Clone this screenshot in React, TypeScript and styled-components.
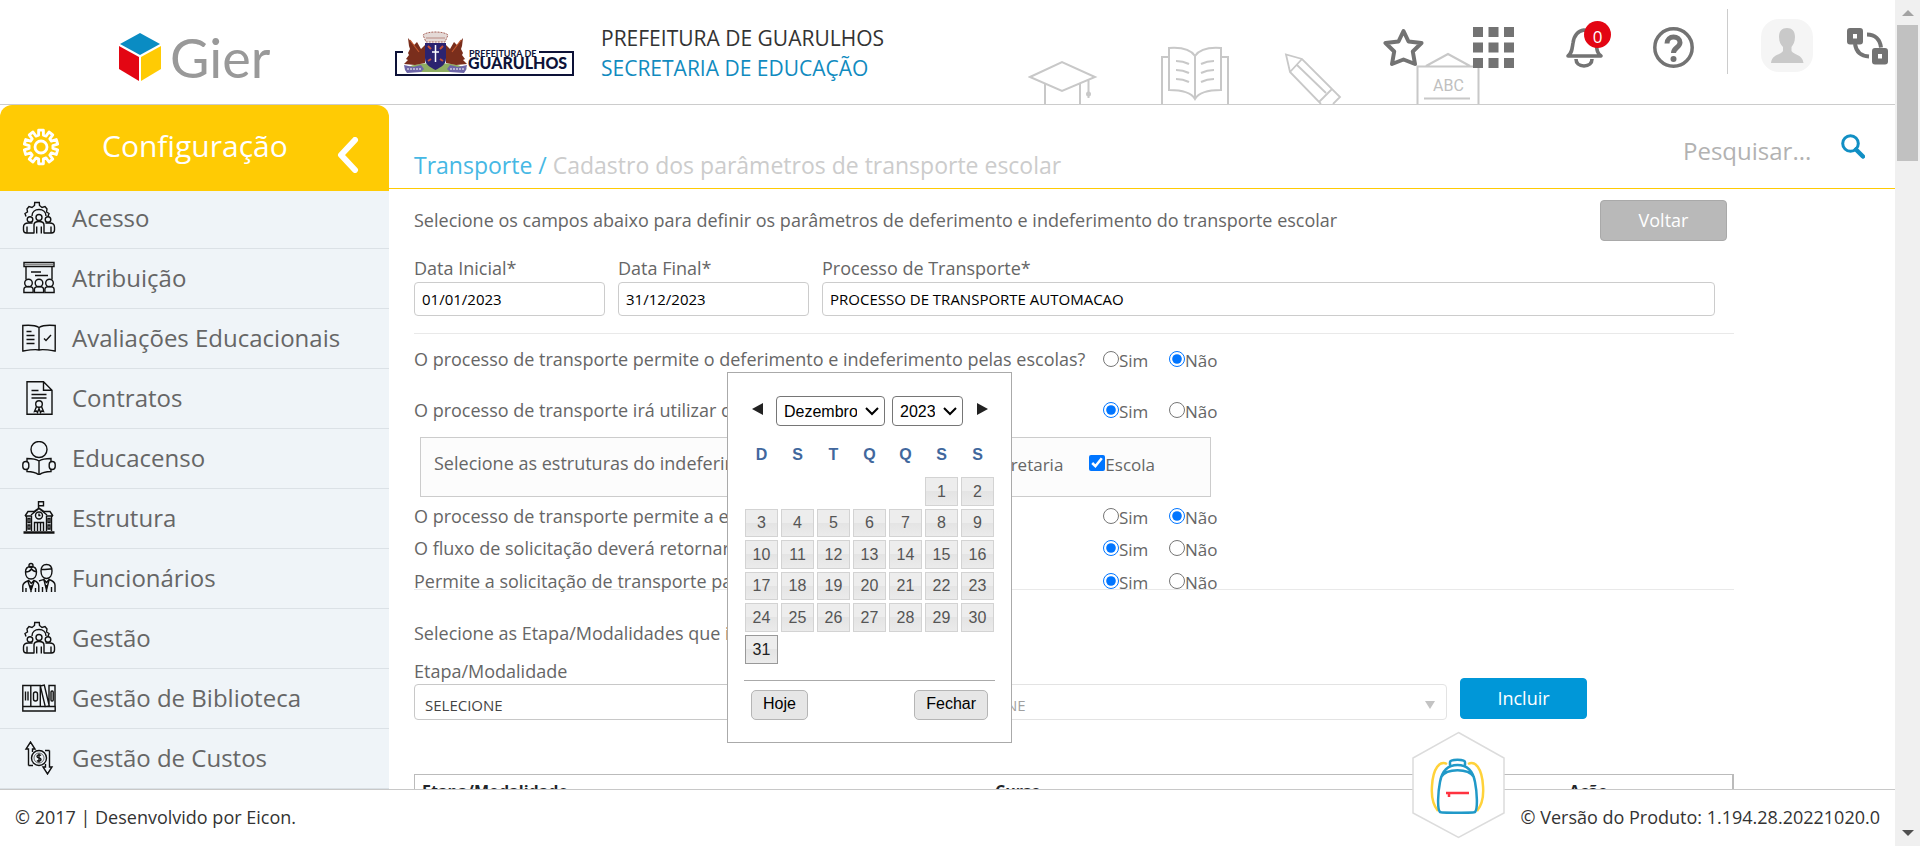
import React from 'react';
import styled, { createGlobalStyle } from 'styled-components';

const GlobalStyle = createGlobalStyle`
  * { box-sizing: border-box; }
  body { margin: 0; font-family: "Open Sans", "Noto Sans", sans-serif; font-size: 18px; line-height: 24px; color: #666; background: #fff; }
  button, input, select { font-family: inherit; margin: 0; }
`;

/* ---------- shell ---------- */

const Window = styled.div`
  display: flex;
  height: 100vh;
  overflow: hidden;
`;

const Page = styled.div`
  flex: 1;
  min-width: 0;
  display: flex;
  flex-direction: column;
`;

const Body = styled.div`
  flex: 1;
  min-height: 0;
  display: flex;
`;

const ScrollTrack = styled.div`
  width: 25px;
  background: #f0f0f0;
  display: flex;
  flex-direction: column;
  align-items: center;
  padding: 10px 0;
`;

const ScrollThumb = styled.div`
  width: 21px;
  height: 136px;
  margin-top: 9px;
  background: #c1c1c1;
`;

const ScrollArrow = styled.div<{ $down?: boolean }>`
  width: 0;
  height: 0;
  border: 6px solid transparent;
  ${(p) =>
    p.$down
      ? 'margin-top: auto; border-bottom: 0; border-top-color: #505050;'
      : 'border-top: 0; border-bottom-color: #a3a3a3;'}
`;

/* ---------- top bar ---------- */

const TopBar = styled.header`
  position: relative;
  height: 105px;
  flex-shrink: 0;
  border-bottom: 1px solid #ccc;
  display: flex;
  align-items: flex-start;
  padding: 0 7px 0 119px;
`;

const GierLogo = styled.svg`
  width: 160px;
  height: 66px;
  margin-top: 33px;
  flex-shrink: 0;
`;

const CityLogo = styled.svg`
  width: 179px;
  height: 46px;
  margin: 31px 27px 0 116px;
  flex-shrink: 0;
`;

const Org = styled.div`
  margin-top: 23px;
  font-size: 21px;
  line-height: 30px;
  white-space: nowrap;
  color: #333;
`;

const OrgUnit = styled.div`
  color: #118bbf;
`;

const SchoolArt = styled.svg`
  position: absolute;
  right: 415px;
  bottom: 0;
  width: 452px;
  height: 58px;
  fill: none;
  stroke: #c8c8c8;
  stroke-width: 2;
`;

const Tools = styled.div`
  position: relative;
  margin-left: auto;
  display: flex;
  align-items: center;
  padding-top: 9px;
`;

const ToolButton = styled.button<{ $gap?: number }>`
  position: relative;
  width: 41px;
  height: 41px;
  padding: 0;
  border: 0;
  background: none;
  margin-right: ${(p) => p.$gap ?? 49}px;
  margin-top: 12px;
  svg { display: block; }
`;

const Badge = styled.span`
  position: absolute;
  left: 21px;
  top: -6px;
  width: 27px;
  height: 27px;
  border-radius: 50%;
  background: #e30613;
  color: #fff;
  font-size: 17px;
  line-height: 32px;
  text-align: center;
`;

const Divider = styled.div`
  width: 1px;
  height: 65px;
  background: #ccc;
`;

const Avatar = styled.div`
  width: 52px;
  height: 53px;
  margin: 8px 34px 0 33px;
  border-radius: 18px;
  background: #f5f5f5;
  overflow: hidden;
`;

/* ---------- sidebar ---------- */

const Sidebar = styled.nav`
  width: 389px;
  flex-shrink: 0;
  background: #eff4f8;
  overflow: hidden;
`;

const SideCorner = styled.div`
  background: #fff;
`;

const SideHead = styled.div`
  height: 86px;
  display: flex;
  align-items: center;
  justify-content: space-between;
  padding: 0 29px 2px 22px;
  border-radius: 12px 12px 0 0;
  background: #ffcb04;
  color: #fff;
  font-size: 30px;
  line-height: 38px;
`;

const SideTitle = styled.div`
  flex: 1;
  padding: 0 0 2px 42px;
`;

const CollapseButton = styled.button`
  border: 0;
  padding: 16px 0 0;
  background: none;
  svg { display: block; }
`;

const SideList = styled.ul`
  list-style: none;
  margin: 0;
  padding: 0;
`;

const SideItem = styled.li`
  border-bottom: 1px solid #dbe1e6;
  &:first-child a { height: 57px; padding-bottom: 4px; }
`;

const SideLink = styled.a`
  display: flex;
  align-items: center;
  height: 59px;
  padding: 0 0 2px 22px;
  color: #666;
  font-size: 24px;
  text-decoration: none;
  svg { width: 34px; height: 34px; margin-right: 16px; fill: none; stroke: #111; stroke-width: 1.4; flex-shrink: 0; }
`;

/* ---------- main ---------- */

const Main = styled.main`
  flex: 1;
  min-width: 0;
  overflow: hidden;
`;

const PageHead = styled.div`
  height: 84px;
  border-bottom: 1px solid #ffcb04;
  display: flex;
  justify-content: space-between;
  align-items: flex-start;
  padding: 0 30px 0 25px;
`;

const Crumbs = styled.h1`
  margin: 44px 0 0;
  font-weight: 400;
  font-size: 23px;
  line-height: 32px;
  color: #ccc;
  a { color: #46b8e4; text-decoration: none; }
`;

const Search = styled.form`
  display: flex;
  align-items: flex-start;
  padding-top: 29px;
`;

const SearchInput = styled.input`
  width: 158px;
  height: 32px;
  padding: 0;
  border: 0;
  background: none;
  font-size: 24px;
  outline: 0;
  &::placeholder { color: #b2b2b2; opacity: 1; }
`;

const SearchButton = styled.button`
  border: 0;
  padding: 0;
  background: none;
  svg { display: block; }
`;

const Content = styled.div`
  position: relative;
  padding: 11px 161px 0 25px;
`;

const IntroRow = styled.div`
  display: flex;
  justify-content: space-between;
  align-items: center;
  padding-right: 7px;
`;

const Intro = styled.p`
  margin: 0;
  padding-bottom: 2px;
`;

const ActionButton = styled.button<{ $primary?: boolean }>`
  width: 127px;
  height: 41px;
  padding: 0 0 2px;
  margin-bottom: ${(p) => (p.$primary ? 1 : 0)}px;
  border-radius: 4px;
  border: 1px solid ${(p) => (p.$primary ? '#0097d8' : '#a9a9a9')};
  background: ${(p) => (p.$primary ? '#0097d8' : '#b9b9b9')};
  color: #fff;
  font-size: 18px;
  line-height: 24px;
`;

const Fields = styled.div`
  display: grid;
  grid-template-columns: 191px 191px 1fr;
  column-gap: 13px;
  padding-right: 19px;
  margin: 15px 0 17px;
`;

const Field = styled.div`
  display: flex;
  flex-direction: column;
  gap: 2px;
`;

const TextInput = styled.input`
  width: 100%;
  height: 34px;
  padding: 0 7px;
  border: 1px solid #ccc;
  border-radius: 4px;
  color: #000;
  font-size: 15px;
`;

const Rule = styled.hr<{ $pull?: boolean }>`
  border: 0;
  height: 1px;
  background: #e9e9e9;
  margin: ${(p) => (p.$pull ? '-4px' : '0')} 0 0;
`;

const Question = styled.fieldset<{ $space: number }>`
  display: flex;
  min-width: 0;
  height: 24px;
  border: 0;
  padding: 0;
  margin: ${(p) => p.$space}px 0 0;
`;

const QuestionText = styled.span`
  width: 689px;
  white-space: nowrap;
`;

const Option = styled.label`
  display: flex;
  align-items: flex-start;
  font-size: 17px;
  line-height: 28px;
  white-space: nowrap;
  input { width: 16px; height: 16px; margin: 4px 0 0; accent-color: #0075ff; }
`;

const Options = styled.div`
  display: grid;
  grid-template-columns: 66px auto;
`;

const StructureBox = styled.fieldset`
  display: flex;
  justify-content: space-between;
  width: 791px;
  height: 60px;
  margin: 15px 0 0 6px;
  padding: 13px 55px 0 13px;
  border: 1px solid #ccc;
  background: #fcfcfc;
`;

const Checks = styled.div`
  display: flex;
  gap: 26px;
`;

const StageIntro = styled.p`
  margin: 31px 0 14px;
`;

const StageRow = styled.div`
  display: grid;
  grid-template-columns: 1fr 1fr 127px;
  column-gap: 13px;
  align-items: end;
  padding-right: 147px;
`;

const StageField = styled.div`
  display: flex;
  flex-direction: column;
  gap: 1px;
`;

const SelectBox = styled.div<{ $off?: boolean }>`
  position: relative;
  opacity: ${(p) => (p.$off ? 0.5 : 1)};
  &::after {
    content: '';
    position: absolute;
    right: 12px;
    top: 17px;
    border: 5px solid transparent;
    border-top: 8px solid #888;
    border-bottom: 0;
  }
`;

const StageSelect = styled.select`
  appearance: none;
  display: block;
  width: 100%;
  height: 36px;
  padding: 6px 30px 0 10px;
  border: 1px solid #c8c8c8;
  border-radius: 4px;
  background: #fff;
  color: #444;
  font-size: 15px;
  opacity: 1;
`;

const StageTable = styled.table`
  width: 100%;
  margin-top: 54px;
  border: 1px solid #bbb;
  border-right-width: 2px;
  border-spacing: 0;
  table-layout: fixed;
  th { padding: 4px 7px; text-align: left; font-size: 16px; color: #212529; line-height: 24px; }
`;

/* ---------- calendar popup ---------- */

const Calendar = styled.div`
  position: absolute;
  left: 338px;
  top: 183px;
  width: 285px;
  height: 371px;
  padding: 23px 14px 0;
  border: 1px solid #aaa;
  background: #fff;
  font-family: "Liberation Sans", Arial, sans-serif;
  font-size: 16px;
`;

const CalHead = styled.div`
  display: flex;
  align-items: center;
  padding: 0 8px 0 10px;
`;

const CalArrow = styled.button<{ $next?: boolean }>`
  width: 12px;
  height: 12px;
  padding: 0;
  border: 0;
  background: none;
  margin: ${(p) => (p.$next ? '0 0 5px auto' : '0 12px 5px 0')};
  svg { display: block; }
`;

const CalSelectBox = styled.div<{ $w: number }>`
  position: relative;
  width: ${(p) => p.$w}px;
  margin-right: 7px;
  svg {
    position: absolute;
    right: 6px;
    top: 11px;
    pointer-events: none;
  }
`;

const CalSelect = styled.select`
  appearance: none;
  display: block;
  width: 100%;
  height: 30px;
  padding: 0 27px 0 7px;
  border: 1px solid #767676;
  border-radius: 4px;
  background: #fff;
  color: #000;
  font-size: 16px;
  text-overflow: clip;
`;

const Days = styled.table`
  border-spacing: 3px;
  table-layout: fixed;
  width: 255px;
  margin-top: 8px;
  th { height: 37px; padding: 0 0 1px; color: #41679d; font-size: 16px; }
  td { height: 28px; padding: 0; }
  tbody tr:nth-child(odd) td { height: 29px; }
  tbody tr:last-child td { height: 29px; }
`;

const DayButton = styled.button<{ $current?: boolean }>`
  display: block;
  width: 100%;
  height: 100%;
  padding: 0;
  border: 1px solid ${(p) => (p.$current ? '#999' : '#d3d3d3')};
  background: linear-gradient(#ededed 50%, #e4e4e4 50%, #ebebeb);
  color: ${(p) => (p.$current ? '#212121' : '#555')};
  font-size: 16px;
`;

const CalFoot = styled.div`
  display: flex;
  justify-content: space-between;
  margin: 13px 2px 0;
  padding: 9px 7px 0 7px;
  border-top: 1px solid #aaa;
`;

const CalButton = styled.button`
  height: 30px;
  padding: 0 11px 2px;
  border: 1px solid #b5b5b5;
  border-radius: 5px;
  background: #e6e6e6;
  color: #000;
  font-size: 16px;
`;

/* ---------- footer ---------- */

const Footer = styled.footer`
  position: relative;
  height: 57px;
  flex-shrink: 0;
  display: flex;
  justify-content: space-between;
  padding: 15px 15px 0;
  border-top: 1px solid #c8c8c8;
  background: #fff;
  color: #333;
`;

const Backpack = styled.button`
  position: absolute;
  right: 389px;
  bottom: 7px;
  width: 95px;
  height: 108px;
  padding: 0;
  border: 0;
  background: none;
  svg { display: block; }
`;

/* ---------- icons ---------- */

const TeamGear = () => (
  <svg viewBox="0 0 34 34">
    <path d="M4 15.500l-1-3 2.500-1.500-.5-3 2-2.500 3 1 2.500-2 .2-3h4.600l.2 3 2.500 2 3-1 2 2.500-.5 3 2.500 1.500-1 3" />
    <path d="M10 15c0-4 3-6.500 7-6.500s7 2.500 7 6.500" />
    <circle cx="17" cy="16.500" r="3" />
    <circle cx="8" cy="18.500" r="2.800" />
    <circle cx="26" cy="18.500" r="2.800" />
    <path d="M12 32.500V24c0-2.500 2-3.500 5-3.500s5 1 5 3.500v8.500M14.700 32.500v-7M19.300 32.500v-7M12 32H4.500c-2 0-3-1-3-3v-3c0-3 2-4 5-4h4M22 32h7.500c2 0 3-1 3-3v-3c0-3-2-4-5-4h-4M5 31.500v-6M29 31.500v-6" />
  </svg>
);

const Classroom = () => (
  <svg viewBox="0 0 34 34">
    <path d="M2 1.500h30v4H2zM4 5.500v13M30 5.500v13M9 11h10M13 14.500h13" />
    <path d="M3 3.500h28" stroke="#888" />
    {[6.500, 17, 27.500].map((x) => (
      <g key={x}>
        <circle cx={x} cy="22" r="3.800" />
        <path d={`M${x - 4.600} 31.500v-3c0-2 1.500-3 4.600-3s4.600 1 4.600 3v3z`} />
      </g>
    ))}
  </svg>
);

const OpenBook = () => (
  <svg viewBox="0 0 34 34">
    <path d="M17 6.500C13 4 6 4 .8 4.500v25.500C7 29 13 28 17 29c4-1 10 0 16.200 1V4.500C28 4 21 4 17 6.500zM17 6.500V29" />
    <path d="M4.500 10.500h5M4.500 14.500h8M4.500 18.500h8M4.500 22.500h8M22 17.500l2 2 5-5.500" />
  </svg>
);

const Contract = () => (
  <svg viewBox="0 0 34 34">
    <path d="M5 .8h16.500l8.500 8.500v24H5zM21.500.8v8.500H30M9.500 9.500h7M9.500 13.500h15M9.500 17h15" />
    <circle cx="17" cy="23" r="3.300" />
    <path d="M14.500 25.500l-2 5 2-.5 1 1.500 1.500-4 1.500 4 1-1.500 2 .5-2-5" />
  </svg>
);

const Reader = () => (
  <svg viewBox="0 0 34 34">
    <circle cx="17" cy="8.500" r="8" />
    <path d="M17 20c-3-2-7-2.500-12-2.500v13c5 0 9 1 12 3.500 3-2.500 7-3.500 12-3.500v-13c-5 0-9 .5-12 2.500zM17 20v14" />
    <rect x=".8" y="20.500" width="6" height="8" rx="3" fill="#eff4f8" />
    <rect x="27.200" y="20.500" width="6" height="8" rx="3" fill="#eff4f8" />
  </svg>
);

const School = () => (
  <svg viewBox="0 0 34 34">
    <path d="M16.500 7V.8h5v4h-5M3 15l3-4.500h6L17 7l5 3.500h6l3 4.500M3 15h6M25 15h6M9 14l8-6.500 8 6.500M4.500 15v15M29.500 15v15M9.500 14.500V30M24.500 14.500V30" />
    <circle cx="17" cy="14.500" r="3.500" />
    <path d="M17 12.500v2h1.500M6 17.500h2v4H6zM6 24h2v4H6zM26 17.500h2v4h-2zM26 24h2v4h-2zM12.500 30v-8.500h9V30M15.500 30v-8.500M18.500 30v-8.500" />
    <path d="M1.500 31.500h31" strokeWidth="2.500" />
  </svg>
);

const Staff = () => (
  <svg viewBox="0 0 34 34">
    <circle cx="9" cy="4.500" r="2" />
    <path d="M3.500 11c0-4 2-5.500 5.500-5.500s5.500 1.500 5.500 5.500-2 7-5.500 7-5.500-3-5.500-7zM3.500 11c3 0 5-1.500 6-3 1 1.500 3 2.500 5 3M19 10c0-4 2-6.500 5.500-6.500s5.500 2.500 5.500 6.500-2 7.500-5.500 7.500S19 14 19 10zM19 8.500c4 0 8 0 11-1" />
    <path d="M.8 31v-6c0-3 2-4 6-5.500l2.500 3 2.500-3c3 1 5 2.500 5 5.500v6M6 20.500l3 9 3-9M4 31v-4M13.500 31v-4M17 20c2-1 3-1 5-1.500l2.500 3 2.500-3c4 1.500 6 2.500 6 5.500v7M22 19l2.500 10L27 19M20.500 31v-5M29.500 31v-5M9 24v7M24.500 24v7" />
  </svg>
);

const Library = () => (
  <svg viewBox="0 0 34 34">
    <path d="M.8 4.500h8v21h-8zM8.800 4.500h9.500v21H8.800zM18.300 5l4-1 5 21-4 .8zM27 4.500h6v21h-6zM.8 25.500h32.400v4.500H.8zM3.500 10.500v9M6 10.500v9M18.300 5v20" />
    <rect x="11.500" y="11" width="4" height="9" rx="2" />
    <rect x="29" y="10" width="2.200" height="10" rx="1" />
  </svg>
);

const Costs = () => (
  <svg viewBox="0 0 34 34">
    <circle cx="17" cy="17" r="7.500" />
    <circle cx="17" cy="17" r="5" strokeWidth=".6" />
    <path d="M19 14.500c-1-1-4-1-4 1s4 1 4 3-3 2-4 1M17 12.500v9" />
    <path d="M6.500 24.500V8H4l4.500-7L13 8h-2.500v3M6.500 24.500H11M27.500 9.500V26H30l-4.500 7-4.500-7h2.500v-3M27.500 9.500H23" />
  </svg>
);

const menu = [
  { label: 'Acesso', Icon: TeamGear },
  { label: 'Atribuição', Icon: Classroom },
  { label: 'Avaliações Educacionais', Icon: OpenBook },
  { label: 'Contratos', Icon: Contract },
  { label: 'Educacenso', Icon: Reader },
  { label: 'Estrutura', Icon: School },
  { label: 'Funcionários', Icon: Staff },
  { label: 'Gestão', Icon: TeamGear },
  { label: 'Gestão de Biblioteca', Icon: Library },
  { label: 'Gestão de Custos', Icon: Costs },
];

const gearPoints = () => {
  const pts: string[] = [];
  const teeth = 10;
  for (let i = 0; i < teeth; i++) {
    const a = (i / teeth) * Math.PI * 2 - Math.PI / 2;
    [[-0.2, 12], [-0.14, 17], [0.14, 17], [0.2, 12]].forEach(([d, r]) => {
      pts.push(`${(18 + Math.cos(a + d) * r).toFixed(1)},${(18 + Math.sin(a + d) * r).toFixed(1)}`);
    });
  }
  return pts.join(' ');
};

const weeks: (number | null)[][] = [
  [null, null, null, null, null, 1, 2],
  [3, 4, 5, 6, 7, 8, 9],
  [10, 11, 12, 13, 14, 15, 16],
  [17, 18, 19, 20, 21, 22, 23],
  [24, 25, 26, 27, 28, 29, 30],
  [31, null, null, null, null, null, null],
];

const YesNo = ({ name, text, value, space }: { name: string; text: string; value: 'sim' | 'nao'; space: number }) => (
  <Question $space={space} aria-label={text}>
    <QuestionText>{text}</QuestionText>
    <Options>
      <Option><input type="radio" name={name} defaultChecked={value === 'sim'} />Sim</Option>
      <Option><input type="radio" name={name} defaultChecked={value === 'nao'} />Não</Option>
    </Options>
  </Question>
);

const PeriodSelect = ({ label, value, width }: { label: string; value: string; width: number }) => (
  <CalSelectBox $w={width}>
    <CalSelect aria-label={label}><option>{value}</option></CalSelect>
    <svg width="14" height="9" fill="none" stroke="#000" strokeWidth="2"><path d="M1 1l6 6 6-6" /></svg>
  </CalSelectBox>
);

const DatePicker = () => (
  <Calendar>
    <CalHead>
      <CalArrow aria-label="Anterior">
        <svg width="12" height="12"><path d="M11 0v12L0 6z" fill="#222" /></svg>
      </CalArrow>
      <PeriodSelect label="Mês" value="Dezembro" width={109} />
      <PeriodSelect label="Ano" value="2023" width={71} />
      <CalArrow $next aria-label="Próximo">
        <svg width="12" height="12"><path d="M0 0v12L11 6z" fill="#222" /></svg>
      </CalArrow>
    </CalHead>
    <Days>
      <thead>
        <tr>{['D', 'S', 'T', 'Q', 'Q', 'S', 'S'].map((d, i) => <th key={i}>{d}</th>)}</tr>
      </thead>
      <tbody>
        {weeks.map((week, i) => (
          <tr key={i}>
            {week.map((day, j) => (
              <td key={j}>{day && <DayButton $current={day === 31}>{day}</DayButton>}</td>
            ))}
          </tr>
        ))}
      </tbody>
    </Days>
    <CalFoot>
      <CalButton>Hoje</CalButton>
      <CalButton>Fechar</CalButton>
    </CalFoot>
  </Calendar>
);

export default function App() {
  return (
    <Window>
      <GlobalStyle />
      <Page>
        <TopBar>
          <GierLogo viewBox="0 0 160 66" role="img" aria-label="Gier">
            <path d="M21 0L41 11 21 22 1 11z" fill="#0a8cc3" />
            <path d="M0 13l20 11v24L0 36z" fill="#e30613" />
            <path d="M42 13L22 24v24l20-12z" fill="#ffcb04" />
            <text x="51" y="45" fontFamily="Lato" fontSize="54" fontWeight="400" fill="#999">Gier</text>
          </GierLogo>
          <CityLogo viewBox="0 0 179 46" role="img" aria-label="Prefeitura de Guarulhos">
            <path d="M8 21H1v23h177V21h-34" fill="none" stroke="#0d1238" strokeWidth="2" />
            <path d="M10 38c8-8 52-8 62 0l-6 3H16z" fill="#8fae62" />
            <path d="M13 7l6 7 3-3 4 7 4-4v18l-10 2-11-1 4-4-2-1 3-4-1-2 2-4-1-3z" fill="#7a2e1c" />
            <path d="M68 7l-6 7-3-3-4 7-4-4v18l10 2 11-1-4-4 2-1-3-4 1-2-2-4 1-3z" fill="#7a2e1c" />
            <path d="M15 9l9 12M66 9l-9 12" stroke="#c2582f" strokeWidth="1.200" />
            <path d="M28 4c4-4 21-4 25 0l-3 7H31z" fill="#e4d9d6" stroke="#a8655c" strokeWidth="1" strokeDasharray="2 1" />
            <path d="M31 7h19" stroke="#b98a82" strokeWidth="1" />
            <path d="M30 12h21v15c0 7-5 9-10.500 12C35 36 30 34 30 27z" fill="#2b2370" />
            <path d="M40.500 14v17M37 21h7" stroke="#fff" strokeWidth="1.500" />
            <path d="M33 15l3 3M48 15l-3 3M33 30l3-2M48 30l-3-2" stroke="#c8533a" strokeWidth="2" />
            <path d="M9 34l9 2 8-2 3 4-3 3-14 1-2-3zM72 34l-9 2-8-2-3 4 3 3 14 1 2-3z" fill="#6e66a8" />
            <path d="M12 38h14M55 38h14" stroke="#fff" strokeWidth="1" strokeDasharray="2 1" />
            <text x="74" y="26" fontFamily="Lato" fontSize="9" fontWeight="700" fill="#0d1238">PREFEITURA DE</text>
            <text x="73" y="38" fontFamily="Lato" fontSize="16" fontWeight="900" fill="#0d1238">GUARULHOS</text>
          </CityLogo>
          <Org>
            PREFEITURA DE GUARULHOS
            <OrgUnit>SECRETARIA DE EDUCAÇÃO</OrgUnit>
          </Org>
          <SchoolArt viewBox="0 0 452 58" aria-hidden="true">
            <path d="M2 31L34 16l33 15-33 14zM17 38v20M52 38v20M60.500 34v18" />
            <circle cx="60.500" cy="48" r="1.500" />
            <path d="M141 2c13-1 22 2 26 8 4-6 13-9 26-8v42c-13 0-22 2-26 9-4-7-13-9-26-9zM167 10v43M141 11h-7v47M193 11h7v47" />
            <path d="M148 15c5 0 9 1 13 3M148 24c5 0 9 1 13 3M148 33c5 0 9 1 13 3M186 15c-5 0-9 1-13 3M186 24c-5 0-9 1-13 3M186 33c-5 0-9 1-13 3" />
            <path d="M293 58L262 26 258 8.500 274 13l38 38-7 7M274 13l-12 13M269 19l29 28M304 43l-13 13" strokeWidth="1.800" />
            <path d="M389.500 58V20.500h61V58M398 20l22-12 22 12M396 52.500h46" />
            <text x="405" y="45" fill="#c0c0c0" stroke="none" fontFamily="Roboto" fontSize="16">ABC</text>
          </SchoolArt>
          <Tools>
            <ToolButton aria-label="Favoritos">
              <svg width="41" height="41" fill="none" stroke="#737373" strokeWidth="4" strokeLinejoin="round">
                <path d="M20.500 4l5 10.500 13 1.500-8.700 8.500 2.200 12.500-11.500-4.500L9 37l2.200-12.500L2.500 16l13-1.500z" />
              </svg>
            </ToolButton>
            <ToolButton aria-label="Aplicativos">
              <svg width="41" height="41" fill="#737373">
                {[0, 15.500, 31].map((y) => [0, 15.500, 31].map((x) => <rect key={`${x}-${y}`} x={x} y={y} width="10" height="10" />))}
              </svg>
            </ToolButton>
            <ToolButton aria-label="Notificações">
              <svg width="41" height="41" fill="none" stroke="#737373" strokeWidth="3.600">
                <path d="M5 29c4-3 4-7 5-13 1-7 4-12 11-13 8 1 11 6 12 13s1 10 5 13zM13 32c0 4 3 7 8 7s8-3 8-7" strokeLinejoin="round" />
              </svg>
              <Badge>0</Badge>
            </ToolButton>
            <ToolButton aria-label="Ajuda" $gap={33}>
              <svg width="41" height="41" fill="none" stroke="#737373">
                <circle cx="20.500" cy="20.500" r="18.700" strokeWidth="3.500" />
                <path d="M14 16.500c0-4 3-6.500 6.500-6.500s6.500 2 6.500 5.500c0 5-6.500 5-6.500 10.500" strokeWidth="5" />
                <circle cx="20.500" cy="32" r="3" fill="#737373" stroke="none" />
              </svg>
            </ToolButton>
            <Divider />
            <Avatar>
              <svg width="52" height="53" viewBox="0 0 52 53" fill="#c9c9c9">
                <path d="M26 9c5 0 8 3 8 9 0 5-2 8-3.500 10v4c2 4 11 3 12 12H10c1-9 10-8 12-12v-4C20 26 18 23 18 18c0-6 3-9 8-9z" />
              </svg>
            </Avatar>
            <ToolButton aria-label="Trocar perfil" $gap={0}>
              <svg width="41" height="41" fill="none" stroke="#737373" strokeWidth="6" strokeLinejoin="round">
                <rect x="3" y="4" width="10" height="10.500" />
                <rect x="28" y="24" width="10" height="10.500" />
                <path d="M8 17c1 7 5 12 14 12.500M20 7.500c8 0 13 5 14 13" strokeWidth="4" />
              </svg>
            </ToolButton>
          </Tools>
        </TopBar>

        <Body>
          <Sidebar>
            <SideCorner>
              <SideHead>
                <svg width="38" height="38" viewBox="-1 -1 38 38" fill="none" stroke="#fff" strokeWidth="2.800" strokeLinejoin="round">
                  <polygon points={gearPoints()} />
                  <circle cx="18" cy="18" r="6" />
                </svg>
                <SideTitle>Configuração</SideTitle>
                <CollapseButton aria-label="Recolher menu">
                  <svg width="24" height="36" fill="none" stroke="#fff" strokeWidth="6" strokeLinecap="round" strokeLinejoin="round">
                    <path d="M19 3L5 18l14 15" />
                  </svg>
                </CollapseButton>
              </SideHead>
            </SideCorner>
            <SideList>
              {menu.map(({ label, Icon }) => (
                <SideItem key={label}>
                  <SideLink href="#"><Icon />{label}</SideLink>
                </SideItem>
              ))}
            </SideList>
          </Sidebar>

          <Main>
            <PageHead>
              <Crumbs><a href="#">Transporte /</a> Cadastro dos parâmetros de transporte escolar</Crumbs>
              <Search>
                <SearchInput aria-label="Pesquisar" placeholder="Pesquisar..." />
                <SearchButton type="button" aria-label="Buscar">
                  <svg width="24" height="25" fill="none" stroke="#118fc4">
                    <circle cx="9.500" cy="9.500" r="7.800" strokeWidth="3" />
                    <path d="M15 15.500l7 7" strokeWidth="4.500" strokeLinecap="round" />
                  </svg>
                </SearchButton>
              </Search>
            </PageHead>

            <Content>
              <IntroRow>
                <Intro>Selecione os campos abaixo para definir os parâmetros de deferimento e indeferimento do transporte escolar</Intro>
                <ActionButton>Voltar</ActionButton>
              </IntroRow>

              <Fields>
                <Field>
                  <label htmlFor="inicio">Data Inicial*</label>
                  <TextInput id="inicio" defaultValue="01/01/2023" />
                </Field>
                <Field>
                  <label htmlFor="fim">Data Final*</label>
                  <TextInput id="fim" defaultValue="31/12/2023" />
                </Field>
                <Field>
                  <label htmlFor="processo">Processo de Transporte*</label>
                  <TextInput id="processo" defaultValue="PROCESSO DE TRANSPORTE AUTOMACAO" />
                </Field>
              </Fields>
              <Rule />

              <YesNo name="q1" space={13} value="nao" text="O processo de transporte permite o deferimento e indeferimento pelas escolas?" />
              <YesNo name="q2" space={27} value="sim" text="O processo de transporte irá utilizar o indeferimento?" />
              <StructureBox>
                <span>Selecione as estruturas do indeferimento:</span>
                <Checks>
                  <Option><input type="checkbox" />Secretaria</Option>
                  <Option><input type="checkbox" defaultChecked />Escola</Option>
                </Checks>
              </StructureBox>
              <YesNo name="q3" space={7} value="nao" text="O processo de transporte permite a escola realizar o deferimento?" />
              <YesNo name="q4" space={8} value="sim" text="O fluxo de solicitação deverá retornar após o indeferimento?" />
              <YesNo name="q5" space={9} value="sim" text="Permite a solicitação de transporte para alunos?" />
              <Rule $pull />

              <StageIntro>Selecione as Etapa/Modalidades que irão participar</StageIntro>
              <StageRow>
                <StageField>
                  <label htmlFor="etapa">Etapa/Modalidade</label>
                  <SelectBox><StageSelect id="etapa"><option>SELECIONE</option></StageSelect></SelectBox>
                </StageField>
                <StageField>
                  <label htmlFor="curso">Curso</label>
                  <SelectBox $off><StageSelect id="curso" disabled><option>SELECIONE</option></StageSelect></SelectBox>
                </StageField>
                <ActionButton $primary>Incluir</ActionButton>
              </StageRow>

              <StageTable>
                <colgroup><col width="573" /><col width="574" /><col /></colgroup>
                <thead><tr><th>Etapa/Modalidade</th><th>Curso</th><th>Ação</th></tr></thead>
              </StageTable>

              <DatePicker />
            </Content>
          </Main>
        </Body>

        <Footer>
          <span>© 2017 | Desenvolvido por Eicon.</span>
          <Backpack aria-label="Mochila">
            <svg width="95" height="108" fill="none" strokeWidth="2.500">
              <path d="M47.500 1.500L93 27v55L47.500 106.500 2 82V27z" fill="#fff" stroke="#dcdcdc" strokeWidth="1.500" />
              <path d="M36 33c-7-4-14 4-15 22-1 12 2 20 6 25M57 33c7-4 14 4 15 22 1 12-2 20-6 25" stroke="#ffd23a" />
              <path d="M29 81c-3-3-2-20 0-30 2-11 8-17 17.500-17S62 40 64 51c2 10 3 27 0 30-1 1-34 1-35 0zM30 46c6-9 27-9 33 0M39 35v-4c0-3 15-3 15 0v4" stroke="#2099c8" />
              <path d="M35 62h23M38 62v4" stroke="#ff3340" />
            </svg>
          </Backpack>
          <span>© Versão do Produto: 1.194.28.20221020.0</span>
        </Footer>
      </Page>
      <ScrollTrack aria-hidden="true">
        <ScrollArrow />
        <ScrollThumb />
        <ScrollArrow $down />
      </ScrollTrack>
    </Window>
  );
}
